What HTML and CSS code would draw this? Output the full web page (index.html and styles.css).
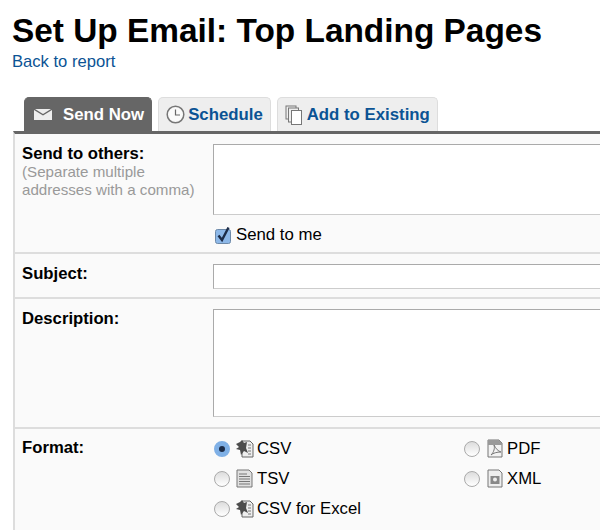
FILE: index.html

```html
<!DOCTYPE html>
<html lang="en">
<head>
  <meta charset="UTF-8" />
  <title>Set Up Email: Top Landing Pages</title>
  <link rel="stylesheet" href="styles.css">
</head>
<body>
  <h1>Set Up Email: Top Landing Pages</h1>
  <a class="back" href="#">Back to report</a>

  <div class="tabs">
    <div class="tab active">
      <svg class="tab-icon mail" width="18" height="11" viewBox="0 0 18 11"><path d="M0 1 L9 6.5 L18 1 V11 H0 Z" fill="#eee"/><path d="M1 0 H17 L9 5 Z" fill="#eee"/></svg>
      <span>Send Now</span>
    </div>
    <div class="tab">
      <svg class="tab-icon" width="19" height="19" viewBox="0 0 19 19"><circle cx="9.5" cy="9.5" r="8.3" fill="#fafafa" stroke="#777" stroke-width="1.5"/><path d="M9.5 4.5 V10 H14" fill="none" stroke="#666" stroke-width="1.2"/></svg>
      <span>Schedule</span>
    </div>
    <div class="tab tab-add">
      <svg class="tab-icon" width="18" height="20" viewBox="0 0 18 20"><rect x="1" y="1" width="10" height="13" fill="#eee" stroke="#777"/><rect x="3.5" y="3" width="10" height="14" fill="#eee" stroke="#777"/><rect x="6.5" y="5.5" width="10" height="14" fill="#fff" stroke="#777"/></svg>
      <span>Add to Existing</span>
    </div>
  </div>

  <div class="panel">
    <div class="row row-send">
      <div class="label">
        <b>Send to others:</b>
        <div class="hint">(Separate multiple addresses with a comma)</div>
      </div>
      <div class="field">
        <div class="box box-to"></div>
        <label class="check">
          <svg width="16" height="18" viewBox="0 0 16 18"><rect x="0.5" y="3.5" width="15" height="14" rx="2" fill="#8db8e8" stroke="#6d89a8"/><path d="M3.5 9.5 L7 14 L13.5 1.5" fill="none" stroke="#1c2c48" stroke-width="2.4"/></svg>
          Send to me
        </label>
      </div>
    </div>

    <div class="row row-subject">
      <div class="label"><b>Subject:</b></div>
      <div class="field"><div class="box box-subject"></div></div>
    </div>

    <div class="row row-desc">
      <div class="label"><b>Description:</b></div>
      <div class="field"><div class="box box-desc"></div></div>
    </div>

    <div class="row row-format">
      <div class="label"><b>Format:</b></div>
      <div class="formats">
        <div class="format">
          <span class="radio on"></span>
          <svg class="file" width="20" height="20" viewBox="0 0 20 20"><path d="M7 2 H15 L18 5 V18 H7 Z" fill="#eee" stroke="#666"/><path d="M13 6 H16 M13 9 H16 M13 12 H16 M13 15 H16" stroke="#777"/><path d="M1 5 L5 3 L7 1 L9 4 L12 3 L11 9 L13 14 L9 12 L6 16 L5 11 L1 10 L4 8 Z" fill="#4d4d4d"/></svg>
          CSV
        </div>
        <div class="format">
          <span class="radio"></span>
          <svg class="file" width="20" height="20" viewBox="0 0 20 20"><path d="M3 1 H14 L17 4 V18 H3 Z" fill="#f2f2f2" stroke="#777"/><path d="M3 1 H14 L17 4 V6 H3 Z" fill="#999"/><path d="M6 16 C9 13 10 9 9 6 C11 10 13 12 16 13 C12 13 8 14 6 16 Z" fill="none" stroke="#777"/></svg>
          PDF
        </div>
        <div class="format">
          <span class="radio"></span>
          <svg class="file" width="20" height="20" viewBox="0 0 20 20"><path d="M2 1 H14 L17 4 V18 H2 Z" fill="#e0e0e0" stroke="#777"/><path d="M4 5 H12 M4 7.5 H15 M4 10 H15 M4 12.5 H15 M4 15 H15" stroke="#777"/></svg>
          TSV
        </div>
        <div class="format">
          <span class="radio"></span>
          <svg class="file" width="20" height="20" viewBox="0 0 20 20"><path d="M3 1 H14 L17 4 V18 H3 Z" fill="#eee" stroke="#777"/><rect x="5.5" y="7" width="9" height="8" fill="#888"/><circle cx="10" cy="10.5" r="2" fill="#eee"/></svg>
          XML
        </div>
        <div class="format">
          <span class="radio"></span>
          <svg class="file" width="20" height="20" viewBox="0 0 20 20"><path d="M7 2 H15 L18 5 V18 H7 Z" fill="#eee" stroke="#666"/><path d="M13 6 H16 M13 9 H16 M13 12 H16 M13 15 H16" stroke="#777"/><path d="M1 5 L5 3 L7 1 L9 4 L12 3 L11 9 L13 14 L9 12 L6 16 L5 11 L1 10 L4 8 Z" fill="#4d4d4d"/></svg>
          CSV for Excel
        </div>
      </div>
    </div>
  </div>
</body>
</html>
```

FILE: styles.css

```css
html, body {
  height: 530px;
  overflow: hidden;
}
body {
  font-family: "Liberation Sans", Arial, sans-serif;
  background: #fff;
  color: #000;
  margin: 0;
}
h1 {
  font-size: 33.4px;
  line-height: 38px;
  margin: 0;
  padding: 12px 0 0 12px;
}
.back {
  display: block;
  margin: 2px 0 0 12px;
  font-size: 16.6px;
  line-height: 20px;
  color: #0b5394;
  text-decoration: none;
}
.tabs {
  display: flex;
  gap: 6px;
  margin: 25px 0 0 24px;
  height: 34px;
}
.tab {
  display: flex;
  align-items: center;
  gap: 3px;
  height: 34px;
  box-sizing: border-box;
  padding: 0 7px;
  background: #eee;
  border: 1px solid #ddd;
  border-bottom: none;
  border-radius: 5px 5px 0 0;
  color: #0b5394;
  font-size: 16.8px;
  font-weight: bold;
}
.tab-add {
  gap: 4px;
}
.tab.active {
  padding: 0 7px 0 9px;
  gap: 11px;
  background: #666;
  border-color: #666;
  color: #fff;
}
.panel {
  margin-left: 13px;
  background: #fafafa;
  border-top: 3px solid #666;
  border-left: 2px solid #ddd;
  height: 400px;
}
.row {
  display: flex;
  border-bottom: 2px solid #ddd;
  padding-left: 7px;
  box-sizing: border-box;
}
.row-send { height: 120px; padding-top: 10px; }
.row-subject { height: 45px; padding-top: 10px; }
.row-desc { height: 130px; padding-top: 10px; }
.row-format { border-bottom: none; padding-top: 9px; }
.label {
  width: 191px;
  flex: none;
  font-size: 16.7px;
  line-height: 18px;
  padding-top: 1px;
}
.hint {
  color: #999;
  font-size: 15.15px;
  width: 176px;
}
.field {
  flex: 1;
}
.box {
  background: #fff;
  border: 1px solid #aaa;
  border-bottom-color: #ccc;
  border-right: none;
}
.box-to { height: 69px; }
.box-subject { height: 23px; }
.box-desc { height: 106px; }
.check {
  display: flex;
  align-items: center;
  gap: 5px;
  margin: 10px 0 0 2px;
  font-size: 16.8px;
  line-height: 20px;
}
.formats {
  display: grid;
  grid-template-columns: 250px 1fr;
  grid-auto-rows: 30px;
  font-size: 16.7px;
  margin-top: -4px;
}
.format {
  display: flex;
  align-items: center;
}
.radio {
  width: 16px;
  height: 16px;
  box-sizing: border-box;
  border: 1px solid #aaa;
  border-radius: 50%;
  background: linear-gradient(#dcdcdc, #fff);
  margin: 0 5px 0 1px;
}
.radio.on {
  border: 5px solid #7fb0e6;
  background: #1c2c48;
}
.file {
  margin-right: 2px;
}
```
